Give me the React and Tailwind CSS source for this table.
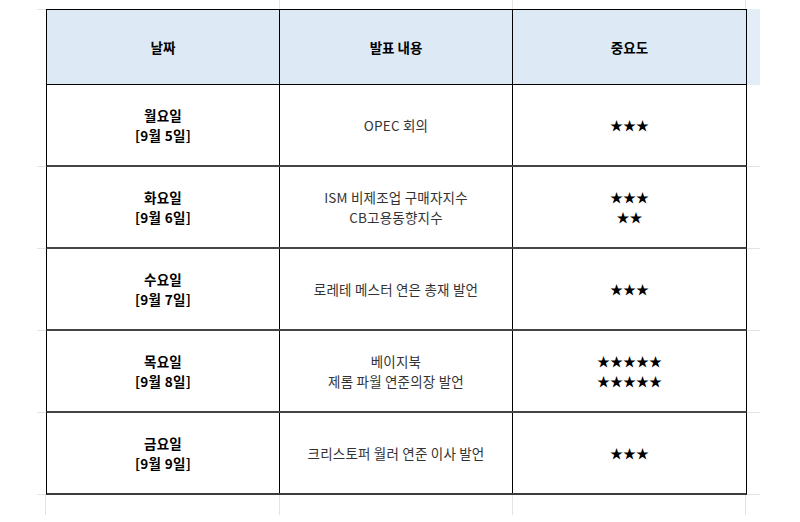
import React from "react";

const rows = [
  { day: "월요일", date: "[9월 5일]", content: ["OPEC 회의"], stars: ["★★★"] },
  { day: "화요일", date: "[9월 6일]", content: ["ISM 비제조업 구매자지수", "CB고용동향지수"], stars: ["★★★", "★★"] },
  { day: "수요일", date: "[9월 7일]", content: ["로레테 메스터 연은 총재 발언"], stars: ["★★★"] },
  { day: "목요일", date: "[9월 8일]", content: ["베이지북", "제롬 파월 연준의장 발언"], stars: ["★★★★★", "★★★★★"] },
  { day: "금요일", date: "[9월 9일]", content: ["크리스토퍼 월러 연준 이사 발언"], stars: ["★★★"] },
];

const font = { fontFamily: '"Noto Sans CJK KR", "Noto Sans", sans-serif' };

export default function App() {
  return (
    <div className="w-[800px] h-[522px] bg-white overflow-hidden text-[13px] leading-[20px]" style={font}>
      {/* top gridline strip */}
      <div className="flex h-[9px]">
        <div className="w-[46px]" />
        <div className="w-[234px] border-r border-[#e3e3e3]" />
        <div className="w-[233px] border-r border-[#e3e3e3]" />
        <div className="w-[233px] border-r border-[#e3e3e3]" />
      </div>
      {/* header */}
      <div className="flex h-[76px]">
        <div className="w-[46px] flex flex-col justify-start items-end">
          <div className="w-[9px] border-t border-[#e3e3e3]" />
        </div>
        <div className="w-[701px] flex border border-black bg-[#ddeaf6] font-bold text-black text-[13.5px]">
          <div className="w-[233px] flex items-center justify-center border-r border-black">날짜</div>
          <div className="w-[233px] flex items-center justify-center border-r border-black">발표 내용</div>
          <div className="flex-1 flex items-center justify-center">중요도</div>
        </div>
        <div className="w-[13px] bg-[#e3edf7]" />
      </div>
      {/* body rows */}
      {rows.map((r, i) => (
        <div key={i} className="flex h-[82px]">
          <div className="w-[46px] flex flex-col justify-end items-end">
            <div className="w-[9px] border-b border-[#e3e3e3]" />
          </div>
          <div
            className={
              "w-[701px] flex border-l border-r border-black " +
              (i === rows.length - 1 ? "border-b-2 border-b-[#3c3c3c]" : "border-b-2 border-b-[#444444]")
            }
          >
            <div className="w-[233px] flex flex-col items-center justify-center border-r border-black font-bold text-black text-[13.5px] tracking-[0.3px]">
              <div>{r.day}</div>
              <div>{r.date}</div>
            </div>
            <div className="w-[233px] flex flex-col items-center justify-center border-r border-black text-[#333333] text-[13.5px] tracking-[0.2px]">
              {r.content.map((c, j) => (
                <div key={j}>{c}</div>
              ))}
            </div>
            <div className="flex-1 flex flex-col items-center justify-center text-black leading-[20px]">
              {r.stars.map((s, j) => (
                <div key={j}>{s}</div>
              ))}
            </div>
          </div>
          <div className="w-[13px] flex flex-col justify-end">
            <div className="border-b border-[#e3e3e3]" />
          </div>
        </div>
      ))}
      {/* bottom gridline strip */}
      <div className="flex h-[20px]">
        <div className="w-[46px] border-r border-[#e3e3e3]" />
        <div className="w-[234px] border-r border-[#e3e3e3]" />
        <div className="w-[233px] border-r border-[#e3e3e3]" />
        <div className="w-[233px] border-r border-[#e3e3e3]" />
      </div>
    </div>
  );
}
